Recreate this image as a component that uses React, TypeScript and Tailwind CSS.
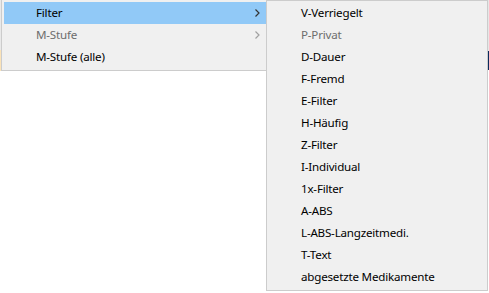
import React from "react";

const Chevron = ({ muted }: { muted?: boolean }) => (
  <svg width="5" height="8" viewBox="0 0 5 8" className="shrink-0">
    <path
      d="M0.5 0.5 L4 4 L0.5 7.5"
      fill="none"
      stroke={muted ? "#a0a0a0" : "#333333"}
      strokeWidth="1.2"
    />
  </svg>
);

const subItems = [
  { label: "V-Verriegelt" },
  { label: "P-Privat", disabled: true },
  { label: "D-Dauer" },
  { label: "F-Fremd" },
  { label: "E-Filter" },
  { label: "H-Häufig" },
  { label: "Z-Filter" },
  { label: "I-Individual" },
  { label: "1x-Filter" },
  { label: "A-ABS" },
  { label: "L-ABS-Langzeitmedi." },
  { label: "T-Text" },
  { label: "abgesetzte Medikamente" },
];

const App = () => {
  return (
    <div
      className="flex w-[489px] h-[293px] bg-white text-[11.6px] tracking-[-0.2px] text-black"
      style={{ fontFamily: '"Segoe UI", "Noto Sans", sans-serif' }}
    >
      {/* Main menu */}
      <div className="flex">
        <div className="w-px h-[71px] flex flex-col">
          <div className="h-[50px] bg-[#e9e9e9]" />
          <div className="h-[21px] bg-[#fbe3b8]" />
        </div>
        <div className="w-[265px] h-[71px] bg-[#f0f0f0] border-l border-b border-[#cccccc] pt-[2px] pl-[2px]">
          <div className="h-[22px] bg-[#91c9f7] flex items-center pl-[32px] pr-[6px]">
            <span className="flex-1">Filter</span>
            <Chevron />
          </div>
          <div className="h-[22px] flex items-center pl-[32px] pr-[6px] text-[#6d6d6d]">
            <span className="flex-1">M-Stufe</span>
            <Chevron muted />
          </div>
          <div className="h-[22px] flex items-center pl-[32px]">
            M-Stufe (alle)
          </div>
        </div>
      </div>

      {/* Submenu */}
      <div className="w-[222px] h-[291px] bg-[#f0f0f0] border border-[#cccccc] pt-[1px] pl-[2px]">
        {subItems.map((item) => (
          <div
            key={item.label}
            className={
              item.disabled
                ? "h-[22px] flex items-center pl-[32px] text-[#6d6d6d]"
                : "h-[22px] flex items-center pl-[32px]"
            }
          >
            {item.label}
          </div>
        ))}
      </div>

      <div className="flex flex-col">
        <div className="h-[51px] w-px bg-[#e6e6e6]" />
        <div className="h-[19px] w-px bg-[#0a2a5c]" />
      </div>
    </div>
  );
};

export default App;
